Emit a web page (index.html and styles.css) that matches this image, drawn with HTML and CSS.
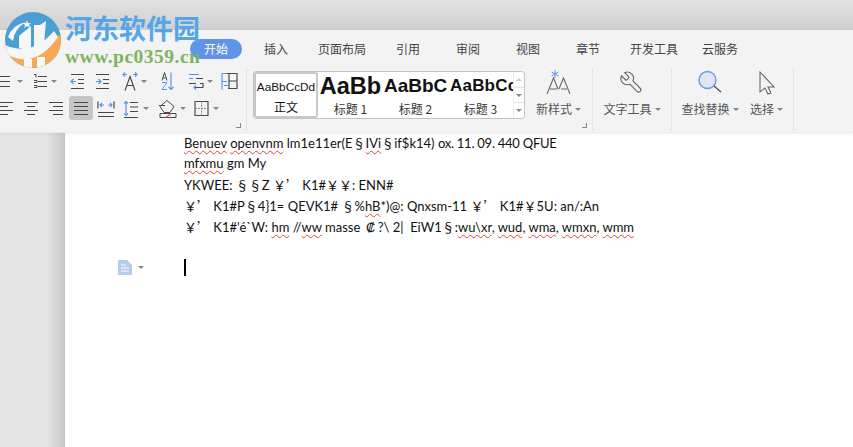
FILE: index.html
```html
<!DOCTYPE html>
<html lang="zh-CN">
<head>
    <meta charset="UTF-8">
    <title>WPS 文字</title>
    <link rel="stylesheet" href="styles.css">
</head>
<body>
    <div class="titlebar"></div>

    <div class="ribbon">
        <div class="tabs">
            <span class="tab tab-active">开始</span>
            <span class="tab gap-22">插入</span>
            <span class="tab gap-30">页面布局</span>
            <span class="tab gap-30">引用</span>
            <span class="tab gap-36">审阅</span>
            <span class="tab gap-36">视图</span>
            <span class="tab gap-36">章节</span>
            <span class="tab gap-30">开发工具</span>
            <span class="tab gap-24">云服务</span>
        </div>

        <div class="tools">
            <div class="para">
                <div class="para-row row-top">
                    <svg class="ico" width="16" height="24" viewBox="0 -0.5 16 24"><path class="ink" d="M3 7h10M3 12h10M3 17h10"/><path class="ink" d="M-1 7h2M-1 12h2M-1 17h2"/></svg>
                    <i class="caret"></i>
                    <svg class="ico" width="16" height="24" viewBox="0 -0.5 16 24"><path class="ink" d="M5 7h9M5 12h9M5 17h9"/><path class="ink thin" d="M1 5h2v3M1 11h3v2H1M1 16h3v2H1"/></svg>
                    <i class="caret"></i>
                    <svg class="ico" width="15" height="24" viewBox="0 -0.5 15 24"><path class="ink" d="M1 5h13M8 10h6M8 14h6M1 19h13"/><path class="acc" d="M6 12H1M3.500 9.500 1 12l2.500 2.500"/></svg>
                    <svg class="ico" width="15" height="24" viewBox="0 -0.5 15 24"><path class="ink" d="M1 5h13M8 10h6M8 14h6M1 19h13"/><path class="acc" d="M1 12h5M3.500 9.500 6 12l-2.500 2.500"/></svg>
                    <svg class="ico" width="16" height="24" viewBox="0 -0.5 16 24"><path class="ink" d="M3 21 8 7l5 14M5 16h6"/><path class="acc" d="M1 5h4M3 3 1 5l2 2M11 5h4M13 3l2 2-2 2"/></svg>
                    <i class="caret"></i>
                    <svg class="ico" width="13" height="24" viewBox="0 -0.5 13 24"><path class="ink thin" d="M1 11 3.500 3 6 11M2 8.500h3"/><path class="acc thin" d="M1 13h5L1 20h5"/><path class="acc" d="M10 3v17M7.500 17.500 10 20l2.500-2.500"/></svg>
                    <svg class="ico" width="16" height="24" viewBox="0 -0.5 16 24"><path class="acc" d="M1 5h10M1 9h4"/><path class="ink" d="M8 9h7M1 14h7M12 14h3v4H6"/><path class="acc" d="M8 16l-2 2 2 2"/></svg>
                    <i class="caret"></i>
                    <svg class="ico" width="17" height="24" viewBox="0 -0.5 17 24"><path class="ink" d="M1 4h15v15H7M8 4v15M8 11.500h8"/><path class="acc" d="M1 4v16M1 12h5M1 4h5M7 16H3"/></svg>
                </div>
                <div class="para-row row-bottom">
                    <svg class="ico" width="16" height="24" viewBox="0 -0.5 16 24"><path class="ink" d="M1 6h15M1 10h10M1 14h15M1 18h10"/></svg>
                    <svg class="ico" width="16" height="24" viewBox="0 -0.5 16 24"><path class="ink" d="M1 6h14M4 10h8M1 14h14M4 18h8"/></svg>
                    <svg class="ico" width="16" height="24" viewBox="0 -0.5 16 24"><path class="ink" d="M1 6h14M5 10h10M1 14h14M5 18h10"/></svg>
                    <div class="justify-on"><svg width="24" height="24" viewBox="0 -0.5 24 24"><path class="ink" d="M5 6h14M5 10h14M5 14h14M5 18h14"/></svg></div>
                    <svg class="ico" width="18" height="24" viewBox="0 -0.5 18 24"><path class="ink" d="M1 5v7M17 5v7M1 16h16M1 20h16"/><path class="acc" d="M3 8.500h4M5 6.500 3 8.500l2 2M11 8.500h4M13 6.500l2 2-2 2"/></svg>
                    <svg class="ico" width="16" height="24" viewBox="0 -0.5 16 24"><path class="acc" d="M3 5v14M1 7l2-2 2 2M1 17l2 2 2-2"/><path class="ink" d="M7 6h8M7 10.500h8M7 15h8M1 21h14"/></svg>
                    <i class="caret"></i>
                    <svg class="ico" width="20" height="24" viewBox="0 -0.5 20 24"><path class="ink thin" d="M9 4 16 10 12 16H6L2 10Z M1 9h6"/><path class="ink thin" d="M2 17h16v4H2Z"/><path class="red" d="M8 21l5-4"/></svg>
                    <i class="caret"></i>
                    <svg class="ico" width="15" height="24" viewBox="0 -0.5 15 24"><path class="ink" d="M1 5h13v14H1Z"/><path class="ink thin dots" d="M7.500 5v14M1 12h13"/></svg>
                    <i class="caret"></i>
                </div>
                <i class="launcher"></i>
            </div>

            <div class="sep"></div>

            <div class="gallery">
                <div class="style-cell style-on">
                    <span class="sample sample-body">AaBbCcDd</span>
                    <span class="style-name name-body">正文</span>
                </div>
                <div class="style-cell">
                    <span class="sample sample-h1">AaBb</span>
                    <span class="style-name">标题 1</span>
                </div>
                <div class="style-cell">
                    <span class="sample sample-h2">AaBbC</span>
                    <span class="style-name">标题 2</span>
                </div>
                <div class="style-cell">
                    <span class="sample sample-h3">AaBbCc</span>
                    <span class="style-name">标题 3</span>
                </div>
                <div class="gallery-scroll">
                    <span class="scroll-btn"><i class="tri-up"></i></span>
                    <span class="scroll-btn"><i class="caret"></i></span>
                    <span class="scroll-btn scroll-more"><i class="caret"></i></span>
                </div>
            </div>

            <div class="big-tool tool-style">
                <svg width="26" height="28" viewBox="0 0 26 28"><path class="ink thin2" d="M1 25 7.500 9 12 20M13 20l4.500-11L24 25M4 20h7M15 20h6"/><path class="acc thin" d="M9 1v8M5.500 3 12.500 7M12.500 3 5.500 7"/></svg>
                <span class="big-label">新样式<i class="caret"></i></span>
                <i class="launcher"></i>
            </div>
            <div class="sep"></div>
            <div class="big-tool tool-text">
                <svg width="26" height="28" viewBox="0 0 26 28"><g transform="translate(25 1) scale(-1.050 1.050)"><path class="ink thin2" d="M14.700 6.300a1 1 0 0 0 0 1.400l1.600 1.600a1 1 0 0 0 1.400 0l3.770-3.770a6 6 0 0 1-7.940 7.940l-6.910 6.910a2.120 2.120 0 0 1-3-3l6.910-6.910a6 6 0 0 1 7.940-7.940l-3.760 3.760z"/></g></svg>
                <span class="big-label">文字工具<i class="caret"></i></span>
            </div>
            <div class="sep"></div>
            <div class="big-tool tool-find">
                <svg width="26" height="28" viewBox="0 0 26 28"><circle cx="10.500" cy="11" r="8.500" fill="#e0e6f0" stroke="#6a9be6" stroke-width="1.400"/><path class="ink" d="m17 17 7 6"/></svg>
                <span class="big-label">查找替换<i class="caret"></i></span>
            </div>
            <div class="big-tool tool-select">
                <svg width="26" height="28" viewBox="0 0 26 28"><path class="ink thin2" d="M6 3v20l5-4 3 6 3-1-3-6h6Z"/></svg>
                <span class="big-label">选择<i class="caret"></i></span>
            </div>
            <div class="sep"></div>
        </div>
    </div>

    <div class="workspace">
        <div class="gutter"></div>
        <div class="page">
            <div class="margin-mark">
                <svg width="14" height="15" viewBox="0 0 14 15"><path d="M0 0h9l5 5v10H0Z" fill="#b4cde8"/><path d="M3 5h5M3 8h8M3 11h8" stroke="#fff" stroke-width="1" fill="none"/></svg>
                <i class="caret"></i>
            </div>
            <div class="doc">
                <p><span class="sp">Benuev</span> <span class="sp">openvnm</span> lm1e11er(E<span class="cjk">§</span><span class="sp">IVi</span><span class="cjk">§</span>if$k14) <span class="tight">ox. 11. 09. 440 QFUE</span></p>
                <p><span class="sp">mfxmu</span> gm My</p>
                <p>YKWEE: <span class="cjk">§§</span>Z <span class="cjk">￥’</span> K1#<span class="cjk">￥￥</span>: ENN#</p>
                <p><span class="cjk">￥’</span> K1#P<span class="cjk">§</span>4}1= QEVK1# <span class="cjk">§</span>%<span class="sp">hB</span>*)@: Qnxsm-11 <span class="cjk">￥’</span> K1#<span class="cjk">￥</span>5U: an/:An</p>
                <p><span class="cjk">￥’</span> K1#'é`W: <span class="sp">hm</span> //<span class="sp">ww</span> masse <span class="cjk wide">₡</span>?\ 2| &nbsp;EiW1<span class="cjk">§</span>:<span class="sp">wu\xr</span>, <span class="sp">wud</span>, <span class="sp">wma</span>, <span class="sp">wmxn</span>, <span class="sp">wmm</span></p>
                <p class="blank"></p>
                <div class="cursor"></div>
            </div>
        </div>
    </div>

    <!-- site watermark sits over the window corner -->
    <div class="watermark">
        <svg class="wm-logo" width="58" height="58" viewBox="0 0 58 58">
            <defs><clipPath id="disc"><circle cx="29" cy="29" r="28"/></clipPath></defs>
            <g clip-path="url(#disc)">
                <rect width="58" height="58" fill="#4b9fd2"/>
                <path d="M0 38Q30 46 58 22V58H0Z" fill="#f4a956"/>
                <path d="M1 34Q28 46 50 20l4 6Q32 58 4 44Z" fill="#f6f6f6"/>
                <path d="M4 26Q8 14 22 11 10 18 9 30Z" fill="#f6f6f6"/>
                <path d="M15 37V25l12-10v25Z M30 14h6l6-4-2 24-10 6Z" fill="#f6f6f6"/>
                <path d="M20 48h8v10h-8ZM33 46h8v12h-8Z" fill="#f6f6f6"/>
            </g>
            <path d="m23 9 1 3 3 0-2 2 1 3-3-2-3 2 1-3-2-2 3 0Z" fill="#f6f6f6"/>
        </svg>
        <div class="wm-text">
            <div class="wm-name">河东软件园</div>
            <div class="wm-url">www.pc0359.cn</div>
        </div>
    </div>
</body>
</html>
```

FILE: styles.css
```css
* {
    box-sizing: border-box;
}
html, body {
    height: 100%;
}
body {
    margin: 0;
    width: 853px;
    height: 447px;
    overflow: hidden;
    display: flex;
    flex-direction: column;
    position: relative;
    font-family: "Noto Sans CJK SC", "Liberation Sans", sans-serif;
    background: #fff;
}
i {
    display: block;
}

.titlebar {
    height: 30px;
    flex: none;
    background: linear-gradient(#e2e2e2, #cfcfcf);
}

/* ribbon */
.ribbon {
    flex: none;
    height: 103px;
    background: #f3f3f3;
    border-bottom: 1px solid #ececec;
    box-shadow: 0 1px 3px rgba(0, 0, 0, 0.06);
    position: relative;
    z-index: 1;
}
.tabs {
    height: 36px;
    padding: 9px 0 0 190px;
    display: flex;
    align-items: flex-start;
}
.tab {
    font-size: 12px;
    line-height: 20px;
    color: #444;
}
.tab-active {
    width: 52px;
    height: 20px;
    border-radius: 10px;
    background: #6094e8;
    color: #fff;
    text-align: center;
}
.gap-22 { margin-left: 22px; }
.gap-24 { margin-left: 24px; }
.gap-30 { margin-left: 30px; }
.gap-36 { margin-left: 36px; }

.tools {
    height: 66px;
    display: flex;
    align-items: flex-start;
}
.sep {
    width: 1px;
    height: 62px;
    margin-top: 2px;
    background: #e2e2e2;
    flex: none;
}

/* icons */
.ink, .acc, .red {
    fill: none;
    stroke-width: 1.150;
}
.ink { stroke: #484848; }
.acc { stroke: #5b94e4; }
.red { stroke: #e0605a; }
.thin { stroke-width: 1; }
.thin2 { stroke-width: 1.050; stroke: #666; }
.dots { stroke-dasharray: 2 1; stroke: #888; }
.caret {
    width: 0;
    height: 0;
    border-left: 3px solid transparent;
    border-right: 3px solid transparent;
    border-top: 3px solid #888;
}
.launcher {
    position: absolute;
    right: 5px;
    bottom: 4px;
    width: 5px;
    height: 5px;
    border-right: 1px solid #888;
    border-bottom: 1px solid #888;
}

/* paragraph group, runs off the left edge */
.para {
    width: 249px;
    margin-left: -3px;
    padding-top: 3px;
    height: 66px;
    display: flex;
    flex-direction: column;
    gap: 3px;
    position: relative;
    flex: none;
}
.para-row {
    display: grid;
    height: 24px;
    align-items: center;
    justify-items: start;
}
.row-top {
    grid-template-columns: 20px 16px 18px 19px 25px 27px 19px 20px 27px 19px 14px 17px;
}
.row-bottom {
    grid-template-columns: 26px 25px 21px 28px 26px 20px 15px 22px 14px 19px 6px;
}
.ico {
    overflow: visible;
}
.justify-on {
    width: 24px;
    height: 24px;
    border-radius: 3px;
    background: #c6c6c6;
}
.justify-on svg {
    display: block;
}

/* style gallery */
.gallery {
    width: 272px;
    height: 48px;
    margin: 5px 0 0 6px;
    display: flex;
    background: #fff;
    border: 1px solid #c4c4c4;
    border-radius: 3px;
    flex: none;
}
.style-cell {
    width: 65px;
    flex: none;
    display: flex;
    flex-direction: column;
    align-items: center;
    justify-content: space-between;
    overflow: hidden;
    padding-bottom: 2px;
}
.style-on {
    width: 64px;
    border: 2px solid #c8c8c8;
    border-radius: 3px;
}
.sample {
    font-family: "Liberation Sans", sans-serif;
    color: #111;
    white-space: nowrap;
    height: 28px;
    line-height: 28px;
}
.sample-body { font-size: 11.800px; line-height: 26px; height: 26px; }
.sample-h1 { font-size: 23.500px; font-weight: bold; }
.sample-h2 { font-size: 19px; font-weight: bold; align-self: flex-start; margin-left: 1px; }
.sample-h3 { font-size: 17px; font-weight: bold; align-self: flex-start; margin-left: 2px; letter-spacing: 0.200px; }
.style-name {
    font-size: 12px;
    line-height: 14px;
    color: #333;
}
.name-body {
    color: #111;
}
.gallery-scroll {
    flex: 1;
    display: flex;
    flex-direction: column;
    border-left: 1px solid #eee;
}
.scroll-btn {
    flex: 1;
    display: flex;
    align-items: center;
    justify-content: center;
    border-bottom: 1px solid #dce4f2;
}
.scroll-more {
    border-bottom: 0;
}
.tri-up {
    width: 0;
    height: 0;
    border-left: 3px solid transparent;
    border-right: 3px solid transparent;
    border-bottom: 3px solid #ccc;
}

/* large buttons */
.big-tool {
    height: 66px;
    padding-top: 3px;
    display: flex;
    flex-direction: column;
    align-items: center;
    gap: 2px;
    flex: none;
    position: relative;
}
.big-label {
    font-size: 12px;
    line-height: 20px;
    color: #555;
    display: flex;
    align-items: center;
    gap: 3px;
    white-space: nowrap;
}
.tool-style { width: 67px; }
.tool-text { width: 78px; }
.tool-find { width: 76px; }
.tool-select { width: 37px; margin-right: 8px; }

/* document */
.workspace {
    flex: 1;
    display: flex;
    min-height: 0;
}
.gutter {
    width: 65px;
    flex: none;
    background: linear-gradient(90deg, #e4e4e4 0, #e4e4e4 46px, #c9c9c9 64px, #bdbdbd 65px);
}
.page {
    flex: 1;
    background: #fff;
    padding: 0 0 0 119px;
    position: relative;
}
.doc {
    font-family: Lato, "Noto Sans CJK SC", sans-serif;
    font-size: 13px;
    line-height: 21.100px;
    color: #111;
    margin-top: -1px;
    white-space: nowrap;
}
.doc p {
    margin: 0;
    height: 21.100px;
}
.doc .blank {
    height: 16px;
}
.cjk {
    font-family: "Noto Sans CJK SC", sans-serif;
    font-size: 13px;
}
.wide {
    display: inline-block;
    width: 14px;
    text-align: center;
}
.tight {
    letter-spacing: -0.250px;
}
.sp {
    text-decoration: underline wavy #e0403a 1px;
    text-underline-offset: 2px;
}
.cursor {
    width: 2px;
    height: 17px;
    margin-top: 6px;
    background: #000;
}
.margin-mark {
    position: absolute;
    left: 53px;
    top: 127px;
    display: flex;
    align-items: center;
    gap: 6px;
}

/* watermark */
.watermark {
    position: absolute;
    left: 4px;
    top: 11px;
    display: flex;
    z-index: 2;
    pointer-events: none;
}
.wm-logo {
    flex: none;
}
.wm-text {
    margin-left: 3px;
    padding-top: 1px;
}
.wm-name {
    font-size: 27px;
    line-height: 32px;
    font-weight: bold;
    color: #55a6e8;
}
.wm-url {
    font-family: "Liberation Serif", serif;
    font-size: 19.500px;
    line-height: 20px;
    margin-top: 3px;
    font-weight: bold;
    color: #7cb562;
    letter-spacing: 0.500px;
}
```
